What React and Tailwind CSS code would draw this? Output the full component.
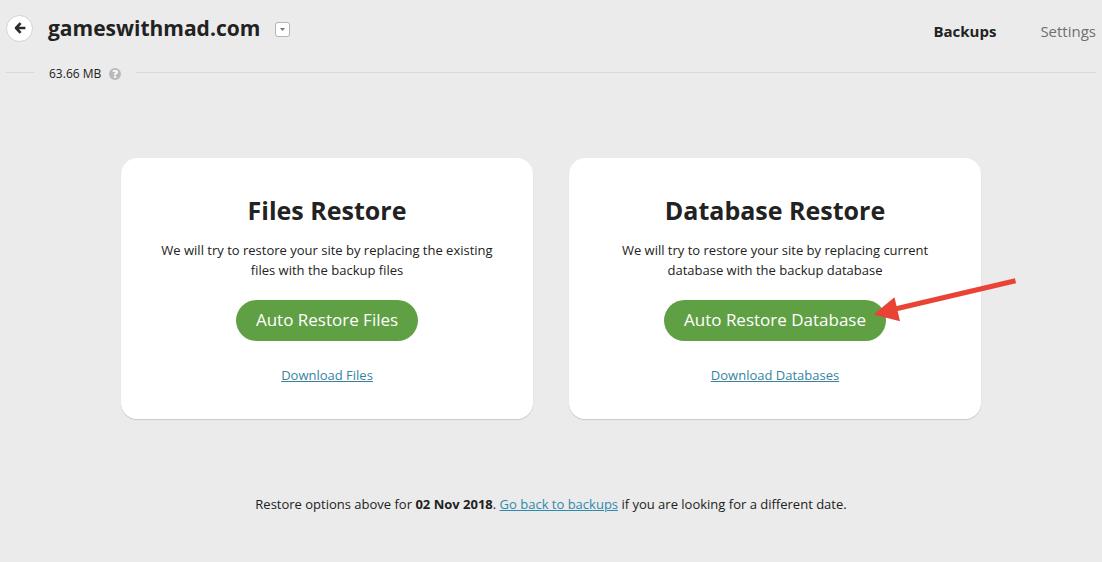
function BackIcon() {
  return (
    <svg width="12" height="12" viewBox="0 0 12 12" fill="none" stroke="#2b2b2b" strokeWidth="2.6" aria-hidden="true">
      <path d="M6.6 1.2 2 6l4.6 4.8M2 6H11.4" strokeLinejoin="round" />
    </svg>
  );
}

function PointerArrow() {
  return (
    <svg
      className="pointer-events-none absolute -top-6 -right-[137px] h-12 w-38"
      viewBox="0 0 152 48"
      aria-hidden="true"
    >
      <path d="M22 33.5 144.5 4.8" stroke="#ea4335" strokeWidth="5" />
      <path d="M2.5 38.5 23.5 21.3 29 45.2z" fill="#ea4335" />
    </svg>
  );
}

function RestoreCard({ title, text, action, download, pointer }) {
  return (
    <section className="flex flex-col items-center rounded-2xl bg-white px-9 pt-[35px] pb-[34px] text-center shadow-[0_1px_1px_#c8c8c8]">
      <h2 className="text-[25px] leading-[34px] font-bold">{title}</h2>
      <p className="mt-[13px] text-[13px] leading-5">{text}</p>
      <div className="relative mt-5">
        <button type="button" className="h-[41px] rounded-full bg-[#60a044] px-5 pb-[2px] text-[17px] leading-6 text-white">
          {action}
        </button>
        {pointer && <PointerArrow />}
      </div>
      <a href="#download" className="mt-6 text-[13px] leading-5 text-[#37839f] underline">
        {download}
      </a>
    </section>
  );
}

export default function App() {
  return (
    <div className="min-h-screen bg-[#ebebeb] font-['Open_Sans',sans-serif] text-[#222]">
      <header className="flex items-center px-1.5 pt-3">
        <button
          type="button"
          aria-label="Back"
          className="flex size-[27px] items-center justify-center rounded-full border border-[#d2d2d2] bg-white"
        >
          <BackIcon />
        </button>
        <h1 className="ml-[15px] text-[21px] leading-8 font-bold">gameswithmad.com</h1>
        <button
          type="button"
          aria-label="Choose site"
          className="mt-[3px] ml-[15px] flex size-[15px] items-center justify-center rounded-[3px] border border-[#b4b4b4] bg-white"
        >
          <svg width="5" height="3" viewBox="0 0 5 3" aria-hidden="true">
            <path d="M0 0h5L2.5 3z" fill="#777" />
          </svg>
        </button>
        <nav className="mt-1.5 ml-auto flex gap-11 text-[15px] leading-6">
          <a href="#backups" className="font-bold">Backups</a>
          <a href="#settings" className="text-[#6f6f6f]">Settings</a>
        </nav>
      </header>

      <div className="mt-5 flex px-1.5">
        <span className="mt-2 h-px w-7 bg-[#d8d8d8]" />
        <span className="ml-[15px] text-[12px] leading-5">63.66 MB</span>
        <button
          type="button"
          aria-label="Help"
          className="ml-2 flex size-3 items-center justify-center self-center rounded-full bg-[#b9b9b9] text-[11px] leading-3 font-extrabold text-white"
        >
          ?
        </button>
        <span className="mt-2 ml-[15px] h-px flex-1 bg-[#d8d8d8]" />
      </div>

      <main className="mx-auto mt-[74px] max-w-[860px]">
        <div className="grid grid-cols-2 gap-9">
          <RestoreCard
            title="Files Restore"
            text="We will try to restore your site by replacing the existing files with the backup files"
            action="Auto Restore Files"
            download="Download Files"
          />
          <RestoreCard
            title="Database Restore"
            text="We will try to restore your site by replacing current database with the backup database"
            action="Auto Restore Database"
            download="Download Databases"
            pointer
          />
        </div>
        <p className="mt-[75px] text-center text-[13px] leading-5">
          Restore options above for <strong>02 Nov 2018</strong>.{" "}
          <a href="#backups" className="text-[#3089ab] underline">Go back to backups</a> if you are looking for a
          different date.
        </p>
      </main>
    </div>
  );
}
